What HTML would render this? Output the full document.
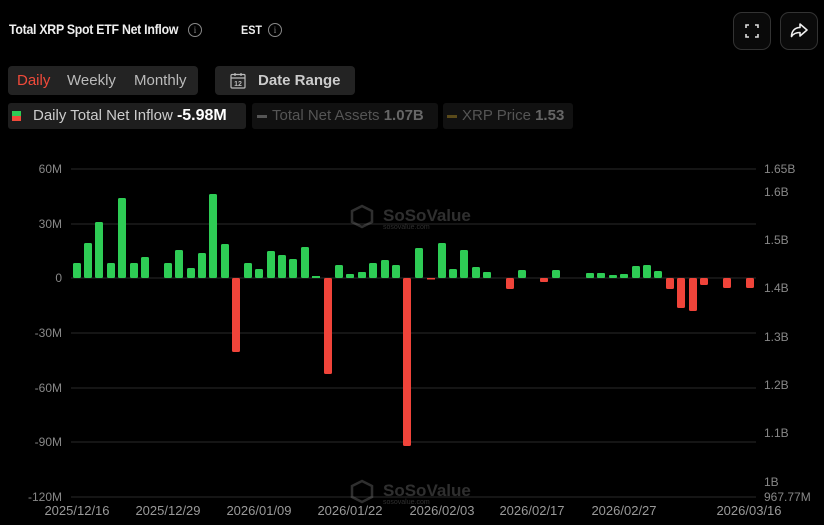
<!DOCTYPE html>
<html><head><meta charset="utf-8"><style>
body{margin:0;width:824px;height:525px;background:#000;overflow:hidden;font-family:"Liberation Sans",sans-serif;color:#ddd;position:relative}
.t{position:absolute;left:9px;top:21px;font-size:14px;font-weight:bold;color:#eee;letter-spacing:-0.3px;transform:scaleX(0.88);transform-origin:0 0;white-space:nowrap}
.est{position:absolute;left:241px;top:23px;font-size:12px;font-weight:bold;color:#eee;transform:scaleX(0.9);transform-origin:0 0}
.ic{position:absolute;width:12px;height:12px;border:1px solid #888;border-radius:50%;font-size:9px;color:#888;text-align:center;line-height:12px;font-family:"Liberation Serif",serif}
.btn{position:absolute;top:12px;width:36px;height:36px;border:1px solid #333;border-radius:9px;background:#0a0a0a}
.seg{position:absolute;left:8px;top:66px;width:190px;height:29px;background:#232323;border-radius:4px;font-size:15px;color:#bbb}
.seg span{position:absolute;top:6px}
.dr{position:absolute;left:215px;top:66px;width:140px;height:29px;background:#232323;border-radius:4px;font-size:15px;font-weight:bold;color:#ccc}
.lg{position:absolute;top:103px;height:26px;border-radius:3px;font-size:15px;line-height:26px}
</style></head><body>
<div class="t">Total XRP Spot ETF Net Inflow</div>
<div class="ic" style="left:188px;top:23px">i</div>
<div class="est">EST</div>
<div class="ic" style="left:268px;top:23px">i</div>
<div class="btn" style="left:733px"><svg width="36" height="36" viewBox="0 0 36 36" fill="none" stroke="#ddd" stroke-width="1.6"><path d="M12 15v-3h3M21 12h3v3M24 21v3h-3M15 24h-3v-3"/></svg></div>
<div class="btn" style="left:780px"><svg width="36" height="36" viewBox="0 0 36 36" fill="none" stroke="#eee" stroke-width="1.6" stroke-linejoin="round"><path d="M19 11l7 6-7 6v-3.5c-4 0-6.5 1-8.5 4 0-5 3-9 8.5-9z"/></svg></div>
<div class="seg"><span style="left:9px;color:#f04a3a">Daily</span><span style="left:59px">Weekly</span><span style="left:126px">Monthly</span></div>
<div class="dr"><svg style="position:absolute;left:15px;top:6px" width="16" height="17" viewBox="0 0 16 17" fill="none" stroke="#bbb" stroke-width="1.2"><rect x="1" y="2.5" width="14" height="13.5" rx="1"/><path d="M1 6h14M5 1v3M11 1v3"/><text x="8" y="14" font-size="7" fill="#bbb" stroke="none" text-anchor="middle" font-family="Liberation Sans">12</text></svg><span style="position:absolute;left:43px;top:6px">Date Range</span></div>
<div class="lg" style="left:8px;width:238px;background:#1e1e1e"><span style="position:absolute;left:4px;top:8px;width:9px;height:5px;background:#2ecc55"></span><span style="position:absolute;left:4px;top:13px;width:9px;height:5px;background:#f04a3a"></span><span style="position:absolute;left:25px;color:#ccc">Daily Total Net Inflow <b style="color:#fff;font-size:16px">-5.98M</b></span></div>
<div class="lg" style="left:252px;width:186px;background:#111"><span style="position:absolute;left:5px;top:12px;width:10px;height:3px;background:#555"></span><span style="position:absolute;left:20px;color:#555">Total Net Assets <b style="color:#666">1.07B</b></span></div>
<div class="lg" style="left:443px;width:130px;background:#111"><span style="position:absolute;left:4px;top:12px;width:10px;height:3px;background:#5a4a1a"></span><span style="position:absolute;left:19px;color:#555">XRP Price <b style="color:#666">1.53</b></span></div>
<svg style="position:absolute;left:0;top:0" width="824" height="525" font-family="Liberation Sans" font-size="12">
<g stroke="#2a2a2a" stroke-width="1">
<line x1="71" x2="756" y1="169" y2="169"/><line x1="71" x2="756" y1="224" y2="224"/><line x1="71" x2="756" y1="278" y2="278"/><line x1="71" x2="756" y1="333" y2="333"/><line x1="71" x2="756" y1="388" y2="388"/><line x1="71" x2="756" y1="442" y2="442"/><line x1="71" x2="756" y1="497" y2="497"/>
</g>
<g fill="#888" text-anchor="end">
<text x="62" y="173">60M</text><text x="62" y="228">30M</text><text x="62" y="282">0</text><text x="62" y="337">-30M</text><text x="62" y="392">-60M</text><text x="62" y="446">-90M</text><text x="62" y="501">-120M</text>
</g>
<g fill="#888">
<text x="764" y="173">1.65B</text><text x="764" y="196">1.6B</text><text x="764" y="244">1.5B</text><text x="764" y="292">1.4B</text><text x="764" y="341">1.3B</text><text x="764" y="389">1.2B</text><text x="764" y="437">1.1B</text><text x="764" y="486">1B</text><text x="764" y="501">967.77M</text>
</g>
<g fill="#999" font-size="13" text-anchor="middle">
<text x="77" y="515">2025/12/16</text><text x="168" y="515">2025/12/29</text><text x="259" y="515">2026/01/09</text><text x="350" y="515">2026/01/22</text><text x="442" y="515">2026/02/03</text><text x="532" y="515">2026/02/17</text><text x="624" y="515">2026/02/27</text><text x="749" y="515">2026/03/16</text>
</g>
<g opacity="0.35" fill="#888">
<text x="383" y="221" font-size="17" font-weight="bold">SoSoValue</text><text x="383" y="229" font-size="7">sosovalue.com</text>
<path d="M362 206l10 5v11l-10 5-10-5v-11z" fill="none" stroke="#888" stroke-width="2.5"/>
<text x="383" y="496" font-size="17" font-weight="bold">SoSoValue</text><text x="383" y="504" font-size="7">sosovalue.com</text>
<path d="M362 481l10 5v11l-10 5-10-5v-11z" fill="none" stroke="#888" stroke-width="2.5"/>
</g>
<g fill="#2ecc55">
<rect x="73" y="263" width="8" height="15" rx="1.5"/><rect x="84" y="243" width="8" height="35" rx="1.5"/><rect x="95" y="222" width="8" height="56" rx="1.5"/><rect x="107" y="263" width="8" height="15" rx="1.5"/><rect x="118" y="198" width="8" height="80" rx="1.5"/><rect x="130" y="263" width="8" height="15" rx="1.5"/><rect x="141" y="257" width="8" height="21" rx="1.5"/>
<rect x="164" y="263" width="8" height="15" rx="1.5"/><rect x="175" y="250" width="8" height="28" rx="1.5"/><rect x="187" y="268" width="8" height="10" rx="1.5"/><rect x="198" y="253" width="8" height="25" rx="1.5"/><rect x="209" y="194" width="8" height="84" rx="1.5"/><rect x="221" y="244" width="8" height="34" rx="1.5"/>
<rect x="244" y="263" width="8" height="15" rx="1.5"/><rect x="255" y="269" width="8" height="9" rx="1.5"/><rect x="267" y="251" width="8" height="27" rx="1.5"/><rect x="278" y="255" width="8" height="23" rx="1.5"/><rect x="289" y="259" width="8" height="19" rx="1.5"/><rect x="301" y="247" width="8" height="31" rx="1.5"/><rect x="312" y="276" width="8" height="2"/>
<rect x="335" y="265" width="8" height="13" rx="1.5"/><rect x="346" y="274" width="8" height="4" rx="1"/><rect x="358" y="272" width="8" height="6" rx="1"/><rect x="369" y="263" width="8" height="15" rx="1.5"/><rect x="381" y="260" width="8" height="18" rx="1.5"/><rect x="392" y="265" width="8" height="13" rx="1.5"/>
<rect x="415" y="248" width="8" height="30" rx="1.5"/><rect x="438" y="243" width="8" height="35" rx="1.5"/><rect x="449" y="269" width="8" height="9" rx="1.5"/><rect x="460" y="250" width="8" height="28" rx="1.5"/><rect x="472" y="267" width="8" height="11" rx="1.5"/><rect x="483" y="272" width="8" height="6" rx="1"/>
<rect x="518" y="270" width="8" height="8" rx="1.5"/><rect x="552" y="270" width="8" height="8" rx="1.5"/><rect x="586" y="273" width="8" height="5" rx="1"/><rect x="597" y="273" width="8" height="5" rx="1"/><rect x="609" y="275" width="8" height="3" rx="1"/><rect x="620" y="274" width="8" height="4" rx="1"/><rect x="632" y="266" width="8" height="12" rx="1.5"/><rect x="643" y="265" width="8" height="13" rx="1.5"/><rect x="654" y="271" width="8" height="7" rx="1.5"/>
</g>
<g fill="#f0443a">
<rect x="232" y="278" width="8" height="74" rx="1.5"/><rect x="324" y="278" width="8" height="96" rx="1.5"/><rect x="403" y="278" width="8" height="168" rx="1.5"/><rect x="427" y="278" width="8" height="1.5"/>
<rect x="506" y="278" width="8" height="11" rx="1.5"/><rect x="540" y="278" width="8" height="4" rx="1"/><rect x="666" y="278" width="8" height="11" rx="1.5"/><rect x="677" y="278" width="8" height="30" rx="1.5"/><rect x="689" y="278" width="8" height="33" rx="1.5"/><rect x="700" y="278" width="8" height="7" rx="1.5"/><rect x="723" y="278" width="8" height="10" rx="1.5"/><rect x="746" y="278" width="8" height="10" rx="1.5"/>
</g>
</svg>
</body></html>
